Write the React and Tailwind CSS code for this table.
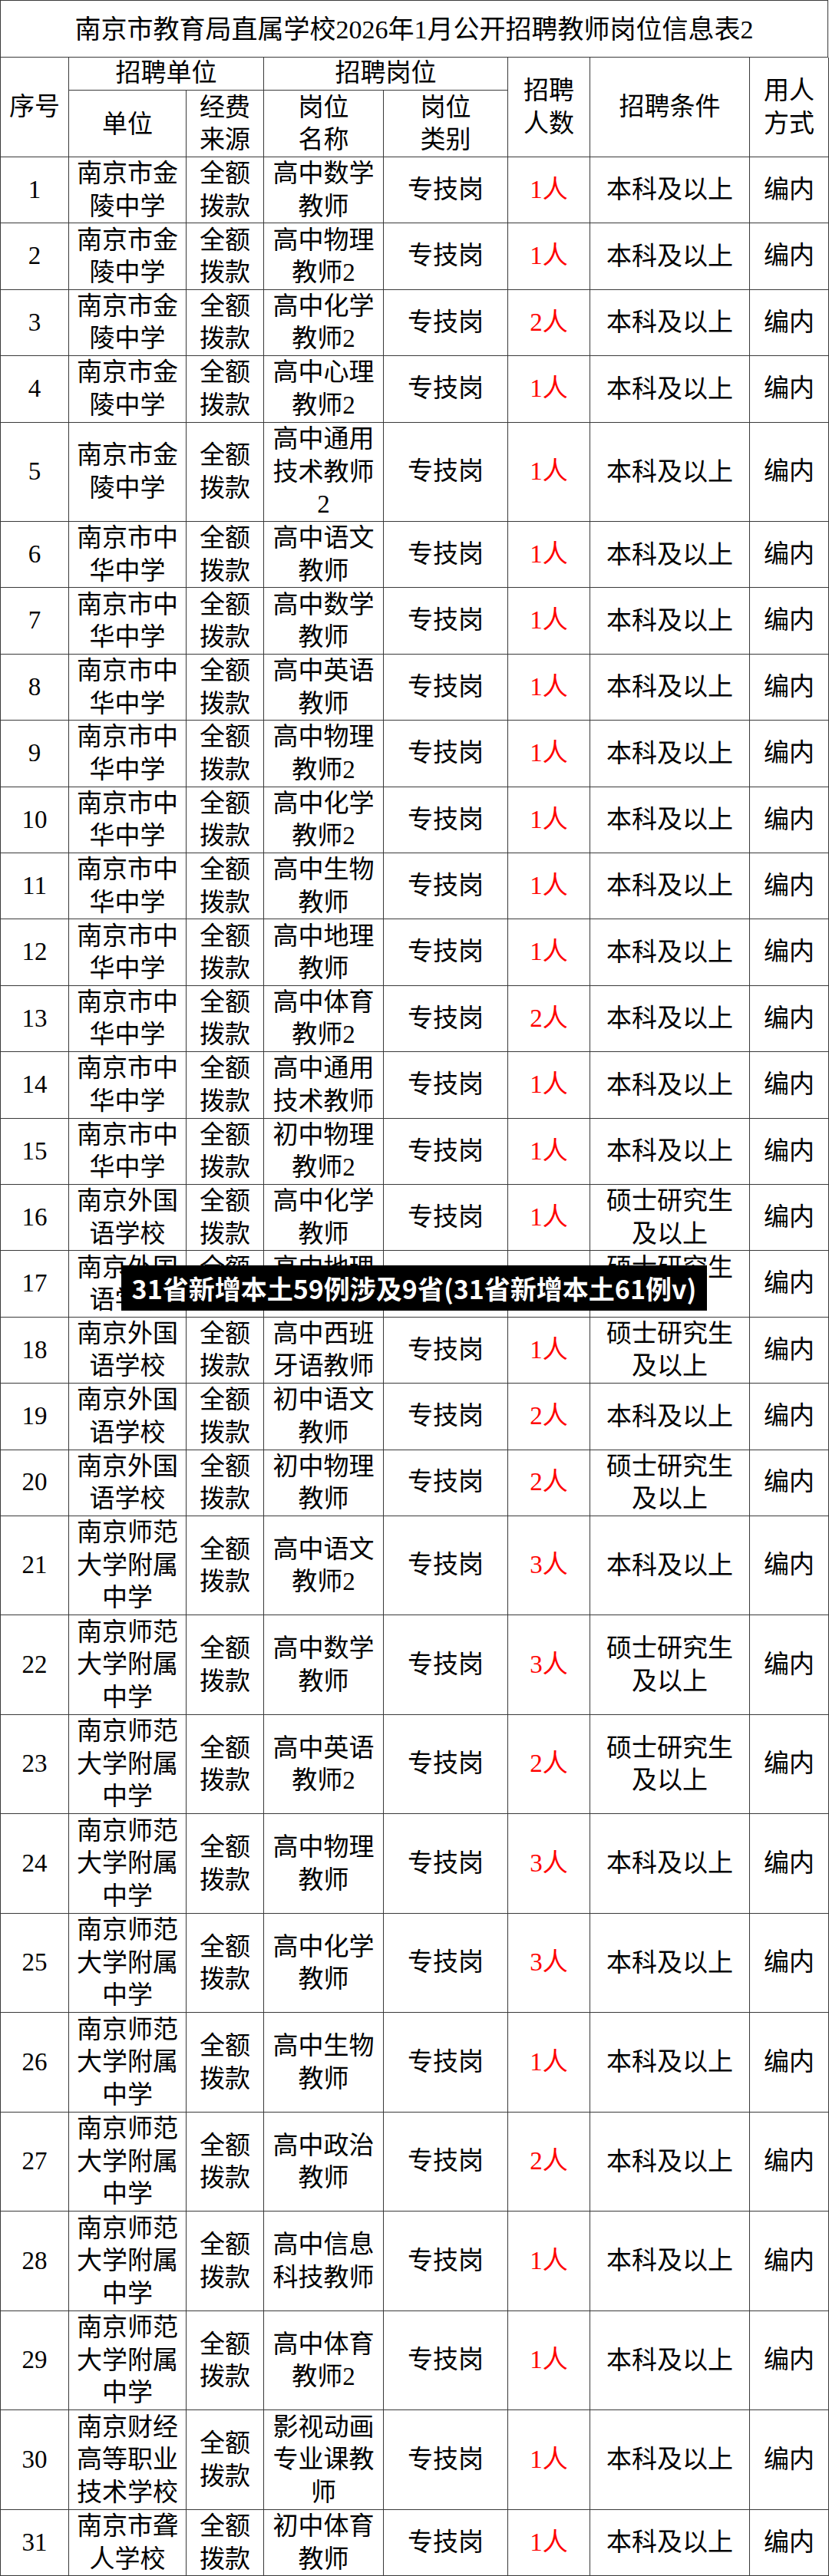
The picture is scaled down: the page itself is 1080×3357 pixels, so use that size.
import React from "react";

const J = ["南京市金", "陵中学"];
const Z = ["南京市中", "华中学"];
const W = ["南京外国", "语学校"];
const S = ["南京师范", "大学附属", "中学"];
const BK = ["本科及以上"];
const SS = ["硕士研究生", "及以上"];

const rows = [
  [1, J, ["高中数学", "教师"], "1人", BK],
  [2, J, ["高中物理", "教师2"], "1人", BK],
  [3, J, ["高中化学", "教师2"], "2人", BK],
  [4, J, ["高中心理", "教师2"], "1人", BK],
  [5, J, ["高中通用", "技术教师", "2"], "1人", BK],
  [6, Z, ["高中语文", "教师"], "1人", BK],
  [7, Z, ["高中数学", "教师"], "1人", BK],
  [8, Z, ["高中英语", "教师"], "1人", BK],
  [9, Z, ["高中物理", "教师2"], "1人", BK],
  [10, Z, ["高中化学", "教师2"], "1人", BK],
  [11, Z, ["高中生物", "教师"], "1人", BK],
  [12, Z, ["高中地理", "教师"], "1人", BK],
  [13, Z, ["高中体育", "教师2"], "2人", BK],
  [14, Z, ["高中通用", "技术教师"], "1人", BK],
  [15, Z, ["初中物理", "教师2"], "1人", BK],
  [16, W, ["高中化学", "教师"], "1人", SS],
  [17, W, ["高中地理", "教师"], "1人", SS],
  [18, W, ["高中西班", "牙语教师"], "1人", SS],
  [19, W, ["初中语文", "教师"], "2人", BK],
  [20, W, ["初中物理", "教师"], "2人", SS],
  [21, S, ["高中语文", "教师2"], "3人", BK],
  [22, S, ["高中数学", "教师"], "3人", SS],
  [23, S, ["高中英语", "教师2"], "2人", SS],
  [24, S, ["高中物理", "教师"], "3人", BK],
  [25, S, ["高中化学", "教师"], "3人", BK],
  [26, S, ["高中生物", "教师"], "1人", BK],
  [27, S, ["高中政治", "教师"], "2人", BK],
  [28, S, ["高中信息", "科技教师"], "1人", BK],
  [29, S, ["高中体育", "教师2"], "1人", BK],
  [30, ["南京财经", "高等职业", "技术学校"], ["影视动画", "专业课教", "师"], "1人", BK],
  [31, ["南京市聋", "人学校"], ["初中体育", "教师"], "1人", BK],
];

function Lines({ lines }) {
  return (
    <div className="flex flex-col items-center">
      {lines.map((l, i) => (
        <div key={i} className="whitespace-nowrap leading-[42.5px]">
          {l}
        </div>
      ))}
    </div>
  );
}

function Cell({ children, className = "" }) {
  return (
    <div
      className={
        "flex items-center justify-center text-center border-r border-b border-[#3a3a3a] " +
        className
      }
    >
      {children}
    </div>
  );
}

export default function App() {
  return (
    <div
      className="relative w-[1080px] h-[3357px] bg-white text-black"
      style={{ fontFamily: '"Liberation Serif", "Noto Sans CJK SC", serif' }}
    >
      <div className="w-[1079px] border-l border-t border-[#3a3a3a] text-[33px]">
        <div className="h-[74px] flex items-center justify-center border-r border-b border-[#3a3a3a] text-[34px] pt-[2px]">
          南京市教育局直属学校2026年1月公开招聘教师岗位信息表2
        </div>
        <div className="grid grid-cols-[89px_153px_101px_156px_162px_107px_208px_103px] grid-rows-[43px_87px]">
          <Cell className="row-span-2">序号</Cell>
          <Cell className="col-span-2">招聘单位</Cell>
          <Cell className="col-span-2">招聘岗位</Cell>
          <Cell className="row-span-2">
            <Lines lines={["招聘", "人数"]} />
          </Cell>
          <Cell className="row-span-2">招聘条件</Cell>
          <Cell className="row-span-2">
            <Lines lines={["用人", "方式"]} />
          </Cell>
          <Cell className="pt-[4px]">单位</Cell>
          <Cell>
            <Lines lines={["经费", "来源"]} />
          </Cell>
          <Cell>
            <Lines lines={["岗位", "名称"]} />
          </Cell>
          <Cell>
            <Lines lines={["岗位", "类别"]} />
          </Cell>
        </div>
        {rows.map(([n, unit, pos, cnt, cond]) => {
          const three = unit.length === 3 || pos.length === 3;
          return (
            <div
              key={n}
              className={
                "grid grid-cols-[89px_153px_101px_156px_162px_107px_208px_103px] " +
                (three ? "h-[129.5px]" : "h-[86.4px]")
              }
            >
              <Cell>{n}</Cell>
              <Cell>
                <Lines lines={unit} />
              </Cell>
              <Cell>
                <Lines lines={["全额", "拨款"]} />
              </Cell>
              <Cell>
                <Lines lines={pos} />
              </Cell>
              <Cell>专技岗</Cell>
              <Cell className="text-[#ff0000]">{cnt}</Cell>
              <Cell>
                <Lines lines={cond} />
              </Cell>
              <Cell>编内</Cell>
            </div>
          );
        })}
      </div>
      <div
        className="absolute top-[1649px] left-[158px] w-[763px] h-[59px] bg-black text-white font-bold text-[34px] flex items-center justify-center whitespace-nowrap"
        style={{ fontFamily: '"Noto Sans CJK SC", sans-serif' }}
      >
        31省新增本土59例涉及9省(31省新增本土61例v)
      </div>
    </div>
  );
}
